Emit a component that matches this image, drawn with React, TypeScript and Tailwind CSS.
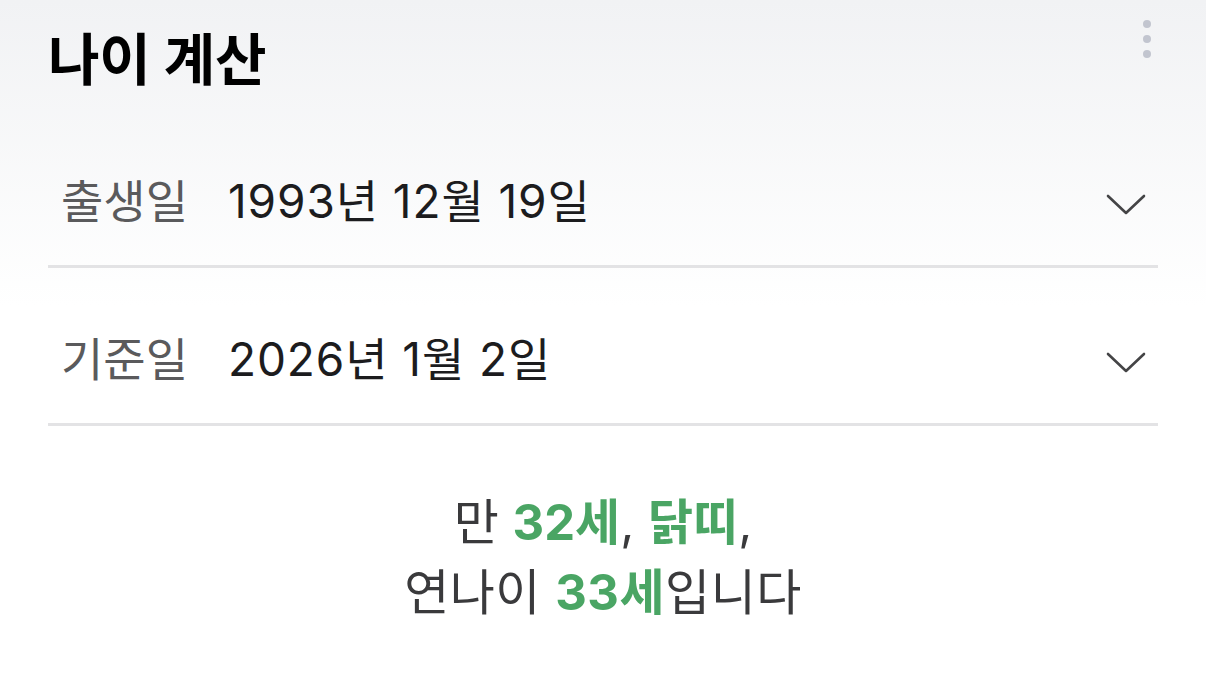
import React from 'react';

const Chevron: React.FC = () => (
    <svg width="40" height="24" viewBox="0 0 40 24" fill="none" className="shrink-0">
        <path d="M2 3 L20 20 L38 3" stroke="#444446" strokeWidth="2.6" strokeLinecap="round" strokeLinejoin="round" />
    </svg>
);

interface DateRowProps {
    label: string;
    value: string;
}

const DateRow: React.FC<DateRowProps> = ({ label, value }) => (
    <div className="flex items-center h-[158px] border-b-[3px] border-[#e3e3e5] pt-[26px]">
        <span className="pl-[13px] w-[180px] text-[46px] text-[#5a5a5c] leading-none">{label}</span>
        <span className="flex-1 text-[46px] text-[#1c1c1e] leading-none tracking-[0.9px]">{value}</span>
        <span className="pr-[12px] pt-[8px]">
            <Chevron />
        </span>
    </div>
);

const App: React.FC = () => {
    return (
        <div
            className="w-[1206px] h-[682px] overflow-hidden bg-gradient-to-b from-[#f1f2f4] via-white via-[45%] to-white"
            style={{ fontFamily: 'Inter, "Noto Sans CJK KR", sans-serif' }}
        >
            <div className="px-[48px]">
                <div className="flex items-start justify-between h-[110px]">
                    <h1 className="mt-[32px] text-[56px] font-bold text-black leading-none tracking-[-0.2px]">나이 계산</h1>
                    <div className="flex flex-col gap-[7px] mt-[20px] mr-[7px]">
                        <span className="w-[8px] h-[8px] rounded-full bg-[#c2c5cf]" />
                        <span className="w-[8px] h-[8px] rounded-full bg-[#c2c5cf]" />
                        <span className="w-[8px] h-[8px] rounded-full bg-[#c2c5cf]" />
                    </div>
                </div>
                <DateRow label="출생일" value="1993년 12월 19일" />
                <DateRow label="기준일" value="2026년 1월 2일" />
                <div className="pt-[62px] text-center text-[49px] leading-[70px] text-[#3a3a3c]">
                    <p>
                        만 <span className="font-bold text-[#4aa564]">32세</span>,{' '}
                        <span className="font-bold text-[#4aa564]">닭띠</span>,
                    </p>
                    <p className="tracking-[0.5px]">
                        연나이 <span className="font-bold text-[#4aa564]">33세</span>입니다
                    </p>
                </div>
            </div>
        </div>
    );
};

export default App;
